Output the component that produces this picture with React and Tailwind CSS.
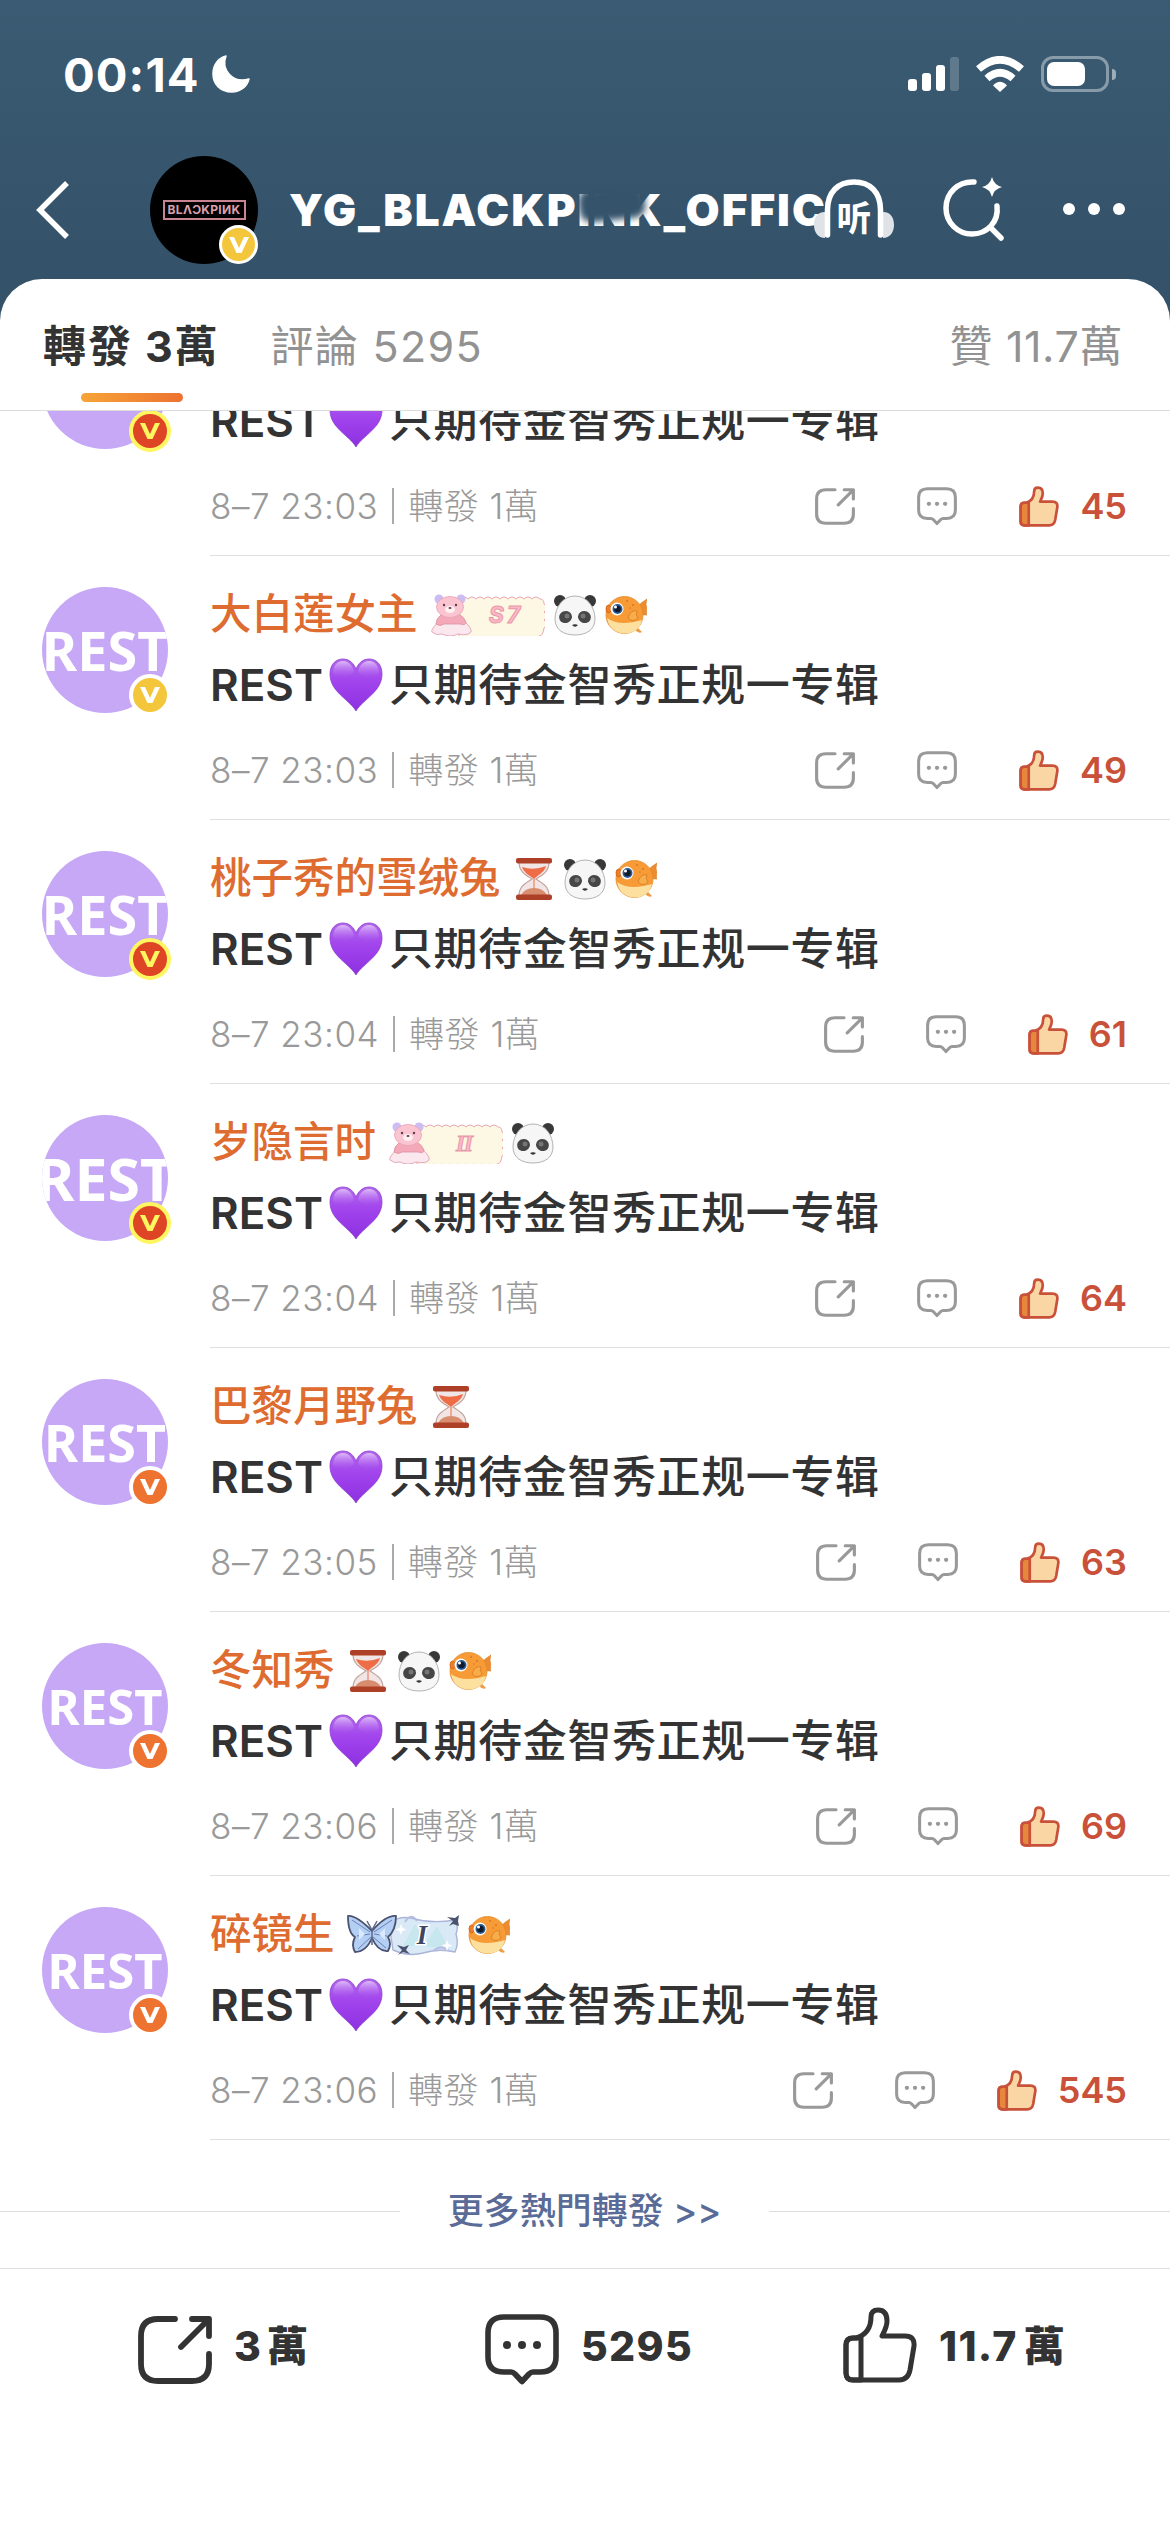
// src/App.jsx
const reposts = [
  { id: 1, name: '', time: '23:03', likes: 45, verified: 'red', avatar: 'text-[51px]', badges: [] },
  { id: 2, name: '大白莲女主', time: '23:03', likes: 49, verified: 'gold', avatar: 'text-[54px]', badges: ['bear-S7', 'panda', 'fish'] },
  { id: 3, name: '桃子秀的雪绒兔', time: '23:04', likes: 61, verified: 'red', avatar: 'text-[54px]', badges: ['hourglass', 'panda', 'fish'] },
  { id: 4, name: '岁隐言时', time: '23:04', likes: 64, verified: 'red', avatar: 'text-[59px]', badges: ['bear-II', 'panda'] },
  { id: 5, name: '巴黎月野兔', time: '23:05', likes: 63, verified: 'orange', avatar: 'text-[52px]', badges: ['hourglass'] },
  { id: 6, name: '冬知秀', time: '23:06', likes: 69, verified: 'orange', avatar: 'text-[49px]', badges: ['hourglass', 'panda', 'fish'] },
  { id: 7, name: '碎镜生', time: '23:06', likes: 545, verified: 'orange', avatar: 'text-[49px]', badges: ['butterfly', 'fish'] },
];

const verifiedStyles = {
  gold: 'bg-[#f4c63c] border-white text-white',
  red: 'bg-[#dd4524] border-[#fdf661] text-[#fdf661]',
  orange: 'bg-[#ee7330] border-white text-white',
};

const ShareIcon = ({ className }) => (
  <svg viewBox="0 0 74 68" fill="none" stroke="currentColor" strokeWidth="5.8" strokeLinecap="round" strokeLinejoin="round" className={className}>
    <path d="M37 3H20Q3 3 3 20V48Q3 65 20 65H54Q71 65 71 48V38" />
    <path d="M54 3H71V20M70 4L43 31" />
  </svg>
);

const CommentIcon = ({ className }) => (
  <svg viewBox="0 0 74 72" className={className}>
    <path
      d="M19 3H55Q71 3 71 19V43Q71 58 55 58H48Q46 58 44 60L37 67.5L30 60Q28 58 26 58H19Q3 58 3 43V19Q3 3 19 3Z"
      fill="none" stroke="currentColor" strokeWidth="5.6" strokeLinejoin="round"
    />
    <g fill="currentColor">
      <circle cx="22" cy="31" r="4" />
      <circle cx="37" cy="31" r="4" />
      <circle cx="52" cy="31" r="4" />
    </g>
  </svg>
);

const LikeIcon = ({ className, filled }) => (
  <svg viewBox="0 0 74 76" stroke="currentColor" strokeWidth="5" strokeLinejoin="round" className={className}>
    <path
      d="M3 38Q3 31 10 31H13C23 28 28 21 28 10C28 5 31 3 35 3C41 3 44 7 44 14C44 20 41 25 39 29H62Q72 29 71 39L67 63Q65 73 56 73H10Q3 73 3 66Z"
      fill={filled ? '#f9d6a4' : 'none'}
    />
    <path d="M3 38Q3 31 10 31H18V73H10Q3 73 3 66Z" fill={filled ? '#e5873c' : 'none'} />
  </svg>
);

const Heart = () => (
  <svg viewBox="0 0 54 54" className="mx-[6px] h-[54px] w-[54px]">
    <defs>
      <linearGradient id="heart" x1="0" y1="0" x2="0" y2="1">
        <stop offset="0" stopColor="#b06ae8" />
        <stop offset=".4" stopColor="#a346ee" />
        <stop offset="1" stopColor="#8c2fe0" />
      </linearGradient>
      <linearGradient id="heartShine" x1="0" y1="0" x2="0" y2="1">
        <stop offset="0" stopColor="#e3c3fb" stopOpacity=".9" />
        <stop offset="1" stopColor="#b565f2" stopOpacity="0" />
      </linearGradient>
    </defs>
    <path d="M27 53C20 41 1 34 1 16C1 6 7 1 14 1C21 1 25 6 27 11C29 6 33 1 40 1C47 1 53 6 53 16C53 34 34 41 27 53Z" fill="url(#heart)" stroke="#8f3fd0" strokeWidth=".8" />
    <path d="M4 15C4 7 9 3 14 3C20 3 24 8 25 14C18 21 8 21 4 15ZM50 15C50 7 45 3 40 3C34 3 30 8 29 14C36 21 46 21 50 15Z" fill="url(#heartShine)" />
  </svg>
);

const Panda = () => (
  <svg viewBox="0 0 42 42" className="h-[42px] w-[42px]">
    <circle cx="6" cy="7" r="6" fill="#383838" />
    <circle cx="36" cy="7" r="6" fill="#383838" />
    <path d="M21 2C33 2 41 13 41 25C41 36 32 41 21 41C10 41 1 36 1 25C1 13 9 2 21 2Z" fill="#f6f6f6" stroke="#aaa" strokeWidth=".9" />
    <ellipse cx="11.500" cy="23" rx="6.500" ry="6" fill="#464646" transform="rotate(-25 11.500 23)" />
    <ellipse cx="30.500" cy="23" rx="6.500" ry="6" fill="#464646" transform="rotate(25 30.500 23)" />
    <circle cx="13" cy="22" r="2.500" fill="#757575" />
    <circle cx="29" cy="22" r="2.500" fill="#757575" />
    <path d="M18 31Q21 29.500 24 31Q21 34.500 18 31Z" fill="#333" />
  </svg>
);

const Fish = () => (
  <svg viewBox="0 0 42 42" className="h-[42px] w-[42px]">
    <path d="M34 11Q37 8 42 5Q40 11 42 14Q41 19 42 21Q37 21 34 20Z" fill="#ed8c2f" stroke="#d77a22" strokeWidth=".6" />
    <path d="M32 33L37 38Q34 40 30 36Z" fill="#ee9c43" />
    <circle cx="19.500" cy="21" r="18.500" fill="#f69b35" stroke="#e38a2c" strokeWidth=".8" />
    <path d="M2 24Q14 33 37 26Q34 39 20 39.500Q5 39 2 24Z" fill="#fbe0a0" />
    <path d="M23 24Q26 15 32 17Q30 20 33 24Q28 29 23 24Z" fill="#f8ad4b" stroke="#dd7f25" strokeWidth=".9" />
    <ellipse cx="3.500" cy="15" rx="2.500" ry="4" fill="#ef7c27" stroke="#cf641a" strokeWidth=".8" />
    <circle cx="12" cy="15" r="6.500" fill="#fff" />
    <circle cx="12.500" cy="15" r="5" fill="#2b5b95" />
    <circle cx="12.500" cy="15" r="3.300" fill="#101a2c" />
    <circle cx="10.500" cy="13" r="1.500" fill="#fff" />
    <g fill="#dd7723">
      <circle cx="22" cy="7" r="1" />
      <circle cx="28" cy="11" r="1" />
      <circle cx="25" cy="14" r=".8" />
    </g>
  </svg>
);

const Hourglass = () => (
  <svg viewBox="0 0 42 42" className="h-[42px] w-[42px]">
    <path d="M6 4H36C36 14 29 17 23 21C29 25 36 28 36 38H6C6 28 13 25 19 21C13 17 6 14 6 4Z" fill="#f1e6e5" stroke="#c3a39c" strokeWidth="1.200" />
    <path d="M9 9Q21 13 33 8C31 15 25 17 21.500 20.500V31Q28 33 31 37H11Q14 33 20.500 31V20.500C16 17 11 15 9 9Z" fill="#ee6d46" />
    <path d="M8 37Q12 30 21 30Q30 30 34 37Z" fill="#d88d6e" />
    <rect x="3" y="0" width="36" height="5.500" rx="2" fill="#ad4027" />
    <rect x="3" y="36.500" width="36" height="5.500" rx="2" fill="#ad4027" />
  </svg>
);

const BearPlate = ({ label }) => (
  <svg viewBox="0 0 115 42" className="h-[42px] w-[115px]">
    <path
      d="M30 5q4-4 8 0q4-4 8 0q4-4 8 0q4-4 8 0q4-4 8 0q4-4 8 0q4-4 8 0q4-4 8 0q4-4 8 0q4-4 8 0q4 0 4 5q5 4 0 8q5 4 0 8q5 4 0 8q-1 8-5 8q-4 4-8 0q-4 4-8 0q-4 4-8 0q-4 4-8 0q-4 4-8 0q-4 4-8 0q-4 4-8 0q-4 4-8 0q-4 4-8 0q-4 4-8 0Z"
      fill="#fdf8e3" stroke="#eba6b6" strokeWidth="1"
    />
    <text
      x="76" y="29" textAnchor="middle" fill="#f9bac6" stroke="#ea96aa" strokeWidth="1" fontSize="23" fontWeight="700" fontStyle="italic"
      className={label === 'II' ? "font-['Liberation_Serif',serif] tracking-[-1px]" : "font-['Inter',sans-serif] tracking-[3px]"}
    >
      {label}
    </text>
    <path d="M10 26Q0 36 2 38Q6 42 12 40Q20 44 28 40Q38 42 41 38Q42 34 34 27Z" fill="#fbe8ee" stroke="#e3a2b3" strokeWidth=".9" />
    <path d="M12 20Q6 24 6 30Q10 33 14 30H30Q36 32 36 28Q34 23 29 20Z" fill="#f3a9b7" stroke="#e08ea1" strokeWidth=".8" />
    <circle cx="9" cy="5" r="4.500" fill="#cbbcf2" />
    <circle cx="31" cy="5" r="4.500" fill="#cbbcf2" />
    <ellipse cx="20" cy="13" rx="13.500" ry="10.500" fill="#fac5d1" stroke="#eaa1b3" strokeWidth=".8" />
    <ellipse cx="20" cy="15.500" rx="5" ry="3.500" fill="#fff0f2" />
    <g fill="#5f3d49">
      <circle cx="14" cy="11" r="1.200" />
      <circle cx="26" cy="11" r="1.200" />
      <ellipse cx="20" cy="14" rx="1.500" ry="1" />
    </g>
  </svg>
);

const ButterflyPlate = () => (
  <svg viewBox="0 0 112 42" className="h-[42px] w-[112px]">
    <path d="M42 9Q52 2 64 4Q84 10 108 6Q112 12 109 20Q112 30 108 38Q92 34 76 39Q62 43 46 36Z" fill="#d9eaf6" stroke="#a9b4d8" strokeWidth="1.400" />
    <path d="M56 32L68 10L78 30L90 12L102 34Q78 32 56 32Z" fill="#bfe5ec" opacity=".7" />
    <path d="M58 8Q64-2 70 7M86 37Q94 30 102 37" fill="none" stroke="#b6bde0" strokeWidth="2" />
    <text x="75" y="30" textAnchor="middle" fill="#3e4560" stroke="#fff" strokeWidth="3" paintOrder="stroke" fontSize="27" fontWeight="700" fontStyle="italic" className="font-['Liberation_Serif',serif]">
      I
    </text>
    <path d="M25 17Q9 1 1 2Q1 19 8 23Q4 31 8 38Q19 38 25 24Q31 38 41 37Q45 30 41 23Q49 16 49 2Q39 1 25 17Z" fill="#b4cff4" stroke="#4a5270" strokeWidth="1.800" strokeLinejoin="round" />
    <path d="M23 18L5 6M23 20L10 22M24 23L11 35M27 18L45 6M27 20L40 22M26 23L39 34" stroke="#6a7fb4" strokeWidth="1" />
    <path d="M12 14L18 20L12 26ZM38 14L32 20L38 26Z" fill="#dbe9fc" />
    <path d="M25 15V31M25 16L20 7M25 16L30 7" stroke="#5d6788" strokeWidth="1.500" fill="none" />
    <path d="M55 36L50 31L57 33L62 31L59 36L63 40L56 38L51 41ZM106 7L100 3L108 4L112 1L111 7L112 12L106 10L102 12Z" fill="#4b5370" />
    <path d="M54 10l1.500 4 4 1.500-4 1.500-1.500 4-1.500-4-4-1.500 4-1.500ZM100 26l1.500 4 4 1.500-4 1.500-1.500 4-1.500-4-4-1.500 4-1.500Z" fill="#fff" />
  </svg>
);

const Badge = ({ type }) => {
  if (type === 'panda') return <Panda />;
  if (type === 'fish') return <Fish />;
  if (type === 'hourglass') return <Hourglass />;
  if (type === 'butterfly') return <ButterflyPlate />;
  return <BearPlate label={type.replace('bear-', '')} />;
};

const VerifiedBadge = ({ kind, className }) => (
  <div className={`absolute flex items-center justify-center rounded-full ${verifiedStyles[kind]} ${className}`}>
    <svg viewBox="0 0 20 18" className="h-[18px] w-[20px]">
      <path d="M0 1H5L10 12L15 1H20L12.500 17H7.500Z" fill="currentColor" />
    </svg>
  </div>
);

const StatusBar = () => (
  <div className="flex h-[148px] items-center justify-between pr-[54px] pl-[63px]">
    <div className="flex items-center gap-[12px]">
      <span className="text-[47px] leading-none font-bold tracking-[1.1px]">00:14</span>
      <svg viewBox="0 0 38 38" className="h-[38px] w-[38px]">
        <path d="M14 1C9 14 20 29 37 24C35 32 28 37 20 37C8 37 1 29 1 19C1 10 6 3 14 1Z" fill="#fff" stroke="#fff" strokeWidth="1.500" strokeLinejoin="round" />
      </svg>
    </div>
    <div className="flex items-center gap-[17px]">
      <div className="flex h-[34px] items-end gap-[5px]">
        <div className="h-[12px] w-[9px] rounded-[3px] bg-white" />
        <div className="h-[18px] w-[9px] rounded-[3px] bg-white" />
        <div className="h-[26px] w-[9px] rounded-[3px] bg-white" />
        <div className="h-[34px] w-[9px] rounded-[3px] bg-white/20" />
      </div>
      <svg viewBox="0 0 48 36" className="h-[36px] w-[48px]">
        <g fill="none" stroke="#fff" strokeWidth="7.500">
          <path d="M2.500 13Q24-5.500 45.500 13" />
          <path d="M11 22.500Q24 11 37 22.500" />
        </g>
        <path d="M24 36L17 29.500Q24 22 31 29.500Z" fill="#fff" />
      </svg>
      <div className="flex items-center gap-[3px]">
        <div className="h-[36px] w-[68px] rounded-[12px] border-[3px] border-white/40 p-[3px]">
          <div className="h-full w-[38px] rounded-[7px] bg-white" />
        </div>
        <div className="h-[11px] w-[4px] rounded-r-full bg-white/50" />
      </div>
    </div>
  </div>
);

const NavBar = () => (
  <div className="flex h-[131px] items-start pt-[8px] pl-[36px]">
    <svg viewBox="0 0 34 58" className="mt-[25px] h-[58px] w-[34px]">
      <path d="M31 2L4 29L31 56" fill="none" stroke="#fff" strokeWidth="5.500" />
    </svg>
    <div className="relative ml-[80px] flex h-[108px] w-[108px] items-center justify-center rounded-full bg-black">
      <div className="flex h-[20px] w-[83px] items-center justify-center border-2 border-[#c98492] text-[12px] leading-none font-bold tracking-[0.3px] text-[#dca0ad]">
        BLΛƆKPIИK
      </div>
      <VerifiedBadge kind="gold" className="right-0 bottom-0 h-[39px] w-[39px] border-[3px]" />
    </div>
    <div className="relative mt-[27px] ml-[31px] w-[536px] text-[44px] leading-[54px] font-black tracking-[2px] whitespace-nowrap">
      YG_BLACKPINK_OFFIC
      {/* smudge over the middle of the name */}
      <div className="absolute top-[4px] left-[290px] h-[33px] w-[66px] -rotate-6 rounded-[12px] bg-[#35546c] blur-[3px]" />
    </div>
    <svg viewBox="0 0 80 60" className="relative mt-[22px] -ml-[11px] h-[60px] w-[80px]">
      <path d="M11 34C3 34 0 40 0 47S4 60 11 60ZM69 34C77 34 80 40 80 47S76 60 69 60Z" fill="#dfe3e7" />
      <path d="M13.500 57V32C13.500 14 24 4 40 4S66.500 14 66.500 32V57" fill="none" stroke="#fff" strokeWidth="5.500" strokeLinecap="round" />
      <text x="40" y="53" textAnchor="middle" fill="#fff" fontSize="35" fontWeight="700" className="font-['Noto_Sans_CJK_SC',sans-serif]">
        听
      </text>
    </svg>
    <svg viewBox="0 0 62 64" className="mt-[21px] ml-[49px] h-[64px] w-[62px]">
      <g fill="none" stroke="#fff" strokeWidth="5.500" strokeLinecap="round">
        <path d="M31 5C15 4 3 16 3 31C3 46 15 57 29 57C44 57 56 45 54 29" />
        <path d="M48 51L58 61" />
      </g>
      <path d="M49 0Q51 8 59 10Q51 12 49 20Q47 12 39 10Q47 8 49 0Z" fill="#fff" />
    </svg>
    <div className="mt-[47px] ml-[58px] flex gap-[13px]">
      <div className="h-[12px] w-[12px] rounded-full bg-white" />
      <div className="h-[12px] w-[12px] rounded-full bg-white" />
      <div className="h-[12px] w-[12px] rounded-full bg-white" />
    </div>
  </div>
);

const Tabs = () => (
  <div className="flex h-[132px] items-start rounded-t-[42px] border-b border-[#dcdcdc] bg-white pt-[38px] pr-[47px] pl-[43px] text-[43px] leading-[58px] whitespace-pre text-[#929292]">
    <div className="relative font-bold tracking-[1.9px] text-[#333]">
      轉發 3萬
      <div className="absolute top-[76px] left-[38px] h-[9px] w-[102px] rounded-full bg-linear-to-r from-[#f6a437] to-[#ed7131]" />
    </div>
    <div className="ml-[51px] tracking-[1.3px]">評論 5295</div>
    <div className="ml-auto tracking-[0.6px]">贊 11.7萬</div>
  </div>
);

const RepostRow = ({ repost }) => (
  <div className="flex h-[264px] shrink-0 pl-[42px]">
    <div className="relative mt-[31px] h-[126px] w-[126px] shrink-0">
      <div className="flex h-full w-full items-center justify-center overflow-hidden rounded-full bg-[#c6a8f6]">
        <span className={`font-['Noto_Sans',sans-serif] leading-none font-bold text-white ${repost.avatar}`}>REST</span>
      </div>
      <VerifiedBadge kind={repost.verified} className="-right-[3px] -bottom-[3px] h-[42px] w-[42px] border-[4px]" />
    </div>
    <div className="ml-[42px] flex-1 border-b border-[#e0e0e0] pr-[43px]">
      <div className="mt-[37px] flex h-[44px] items-center gap-[9px]">
        <span className="mr-[3px] text-[41.500px] leading-none font-medium text-[#de6c30]">{repost.name}</span>
        {repost.badges.map((type) => (
          <Badge key={type} type={type} />
        ))}
      </div>
      <div className="mt-[21px] flex h-[54px] items-center text-[44px] leading-none font-semibold text-[#333]">
        <span>REST</span>
        <Heart />
        <span className="font-medium tracking-[0.6px]">只期待金智秀正规一专辑</span>
      </div>
      <div className="mt-[30px] flex h-[56px] items-center text-[#999]">
        <div className="flex items-center text-[35px] leading-none font-light tracking-[0.5px] whitespace-pre">
          8–7 {repost.time}
          <div className="mx-[14px] h-[36px] w-[2px] bg-[#aaa]" />
          轉發 1萬
        </div>
        <ShareIcon className="ml-auto h-[37px] w-[40px]" />
        <CommentIcon className="ml-[62px] h-[39px] w-[40px]" />
        <LikeIcon filled className="ml-[62px] h-[41px] w-[40px] text-[#c9513a]" />
        <span className="ml-[21px] text-[36px] leading-none font-semibold text-[#c9513a]">{repost.likes}</span>
      </div>
    </div>
  </div>
);

const BottomBar = () => (
  <div className="flex h-[264px] border-t border-[#e0e0e0] bg-white pt-[38px] pl-[138px] text-[41px] leading-none font-extrabold text-[#333]">
    <button className="flex h-[78px] w-[347px] items-center gap-[22px]">
      <ShareIcon className="mt-[7px] h-[68px] w-[74px]" />
      <span>3<span className="ml-[6px]">萬</span></span>
    </button>
    <button className="flex h-[78px] w-[358px] items-center gap-[22px]">
      <CommentIcon className="mt-[8px] h-[72px] w-[74px]" />
      <span className="tracking-[1.3px]">5295</span>
    </button>
    <button className="flex h-[78px] items-center gap-[22px]">
      <LikeIcon className="-mt-[2px] h-[76px] w-[74px]" />
      <span className="tracking-[1.3px]">11.7<span className="ml-[6px]">萬</span></span>
    </button>
  </div>
);

const App = () => {
  return (
    <div className="flex h-[2532px] w-[1170px] flex-col overflow-hidden bg-white font-['Inter','Noto_Sans_CJK_TC','Noto_Sans_CJK_SC',sans-serif]">
      <div className="bg-linear-to-b from-[#3a5b73] to-[#314e64] text-white">
        <StatusBar />
        <NavBar />
        <Tabs />
      </div>
      <div className="flex h-[1729px] flex-col justify-end overflow-hidden">
        {reposts.map((repost) => (
          <RepostRow key={repost.id} repost={repost} />
        ))}
      </div>
      <div className="flex h-[128px] items-center pt-[14px]">
        <div className="h-px w-[400px] bg-[#dedede]" />
        <div className="w-[369px] text-center text-[36px] leading-none font-medium text-[#5a6b97]">更多熱門轉發 &gt;&gt;</div>
        <div className="h-px flex-1 bg-[#dedede]" />
      </div>
      <BottomBar />
    </div>
  );
};

export default App;
